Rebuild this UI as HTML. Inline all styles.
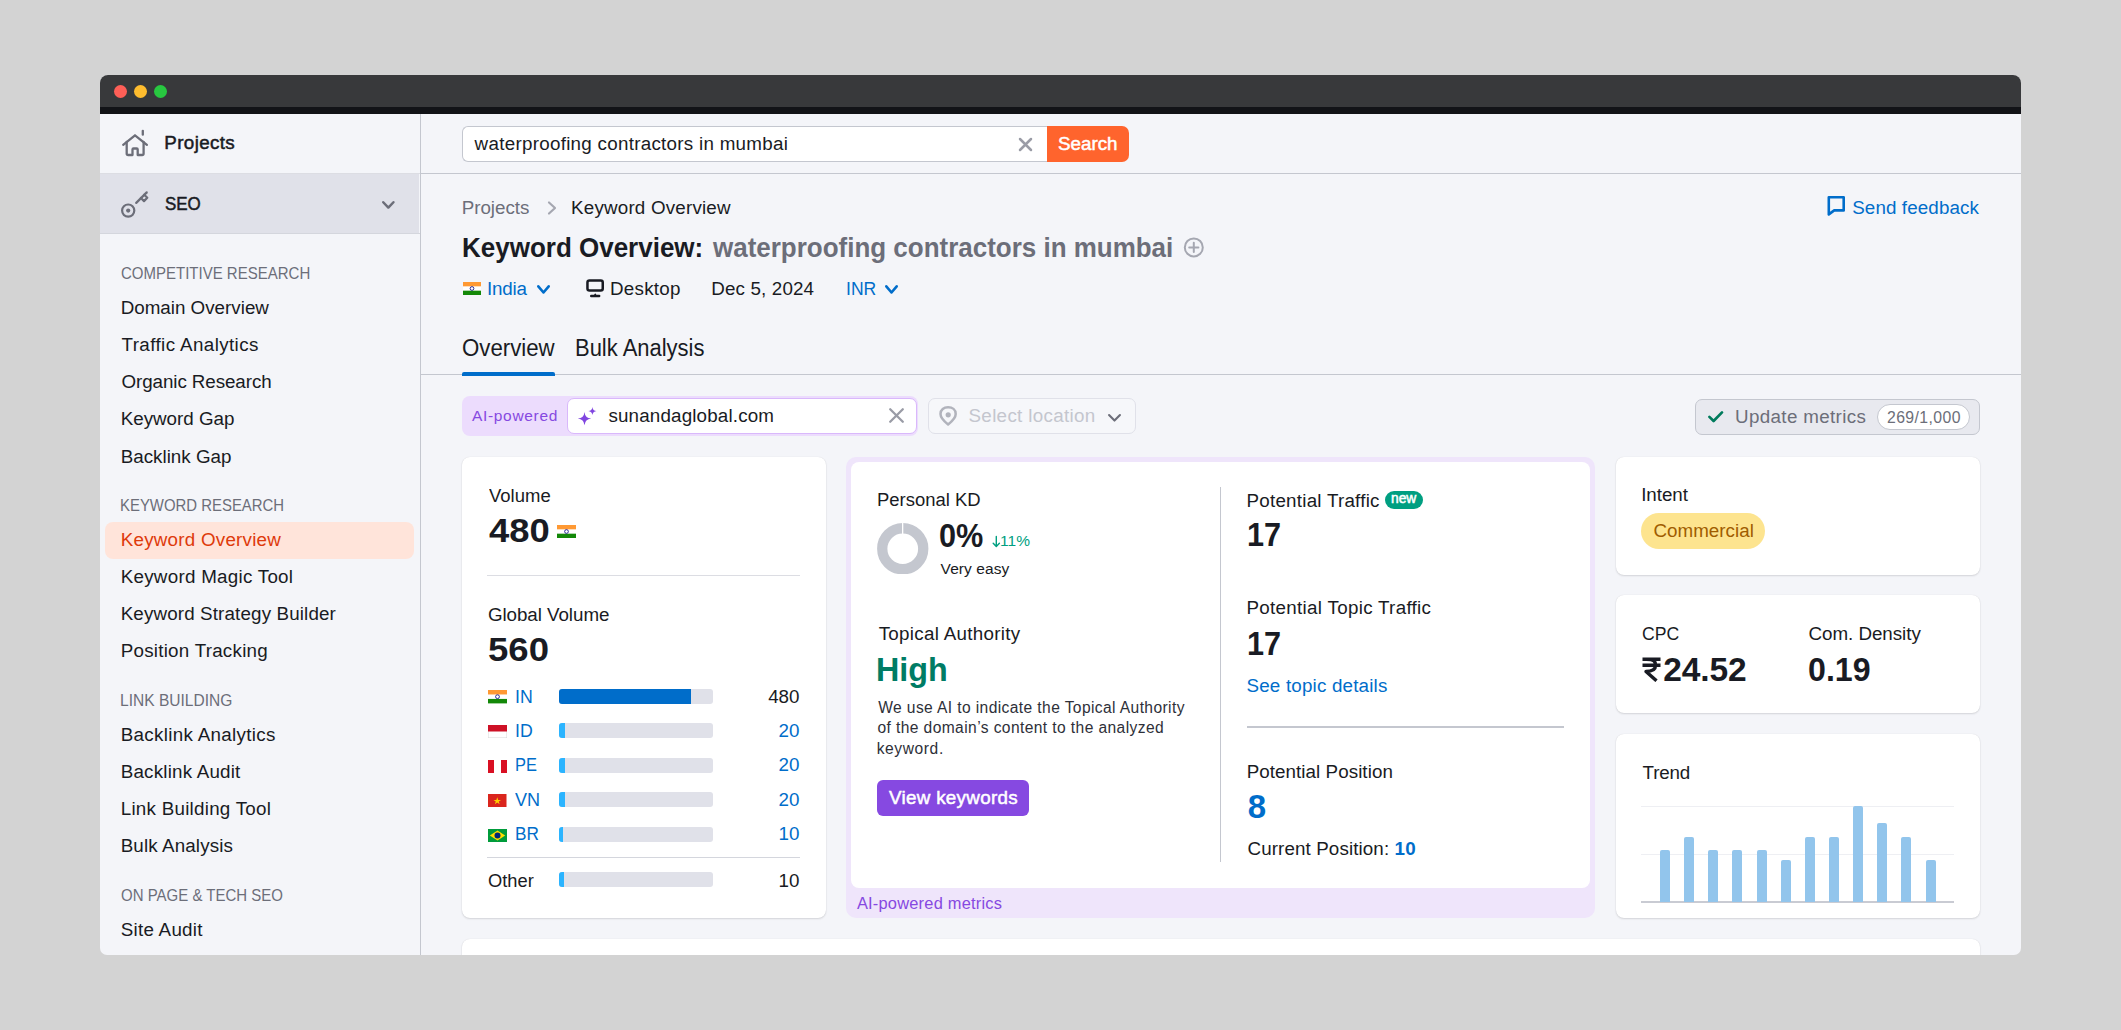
<!DOCTYPE html>
<html><head><meta charset="utf-8"><title>Keyword Overview</title>
<style>
html,body{margin:0;padding:0;}
body{width:2121px;height:1030px;background:#d3d3d3;position:relative;overflow:hidden;font-family:"Liberation Sans",sans-serif;}
.win{position:absolute;left:100px;top:75px;width:1921px;height:880px;background:#f4f5f9;border-radius:8px 8px 7px 7px;overflow:hidden;}
.b{position:absolute;display:block;}
.t{position:absolute;white-space:nowrap;line-height:1;}
</style></head><body><div class="win">
<div class="b" style="left:0px;top:0px;width:1921px;height:32px;background:#38393b;"></div>
<div class="b" style="left:0px;top:32px;width:1921px;height:7px;background:#121317;"></div>
<div class="b" style="left:14px;top:10.3px;width:13px;height:13px;background:#fe5f57;border-radius:50%;"></div>
<div class="b" style="left:34px;top:10.3px;width:13px;height:13px;background:#febc2e;border-radius:50%;"></div>
<div class="b" style="left:54px;top:10.3px;width:13px;height:13px;background:#28c840;border-radius:50%;"></div>
<div class="b" style="left:320px;top:39px;width:1px;height:841px;background:#c4c7cf;"></div>
<div class="b" style="left:0px;top:98px;width:320px;height:1px;background:#dcdde3;"></div>
<div class="b" style="left:0px;top:99px;width:319px;height:59px;background:#e0e1e9;"></div>
<div class="b" style="left:0px;top:158px;width:320px;height:1px;background:#d4d6dd;"></div>
<svg class="b" style="left:16px;top:49px" width="40" height="40" viewBox="0 0 40 40"><g fill="none" stroke="#6c6e79" stroke-width="2.3" stroke-linecap="round" stroke-linejoin="round"><path d="M7.2 20.8 L19 11.3 L30.9 20.8"/><path d="M10.7 18 V29.5 Q10.7 31 12.2 31 H16.5 V25.5 Q16.5 24.5 17.5 24.5 H20.7 Q21.7 24.5 21.7 25.5 V31 H26.1 Q27.6 31 27.6 29.5 V18"/><path d="M26.8 6.8 V10.7"/></g></svg>
<div class="t" id="sb_projects" style="left:64.32px;top:59.28px;font-size:18.8px;color:#191b23;-webkit-text-stroke:0.5px #191b23;letter-spacing:0.37px;">Projects</div>
<svg class="b" style="left:16px;top:110px" width="40" height="40" viewBox="0 0 40 40"><g fill="none" stroke="#6c6e79" stroke-width="2.2" stroke-linecap="round" stroke-linejoin="round"><circle cx="12.2" cy="25.6" r="6.1"/><path d="M20.2 17.9 L30.7 7.4"/><path d="M24.9 13 L28 16.1 L31.3 12.8 L28.2 9.7"/></g><circle cx="12.2" cy="25.6" r="2.1" fill="#6c6e79"/></svg>
<div class="t" id="sb_seo" style="left:65.12px;top:120.08px;font-size:18.8px;color:#191b23;-webkit-text-stroke:0.5px #191b23;transform:scaleX(0.9028);transform-origin:0 0;">SEO</div>
<svg class="b" style="left:280.2px;top:123.8px" width="16.7" height="11.8" viewBox="0 0 16.7 11.8"><path d="M3.25 3.25 L8.35 8.55 L13.45 3.25" fill="none" stroke="#6c6e79" stroke-width="2.5" stroke-linecap="round" stroke-linejoin="round"/></svg>
<div class="t" id="sb_h1" style="left:21px;top:190.12px;font-size:16.4px;color:#6c6e79;transform:scaleX(0.9153);transform-origin:0 0;">COMPETITIVE RESEARCH</div>
<div class="t" id="sb_a0" style="left:20.7px;top:224.08px;font-size:18.8px;color:#191b23;">Domain Overview</div>
<div class="t" id="sb_a1" style="left:21.5px;top:261.08px;font-size:18.8px;color:#191b23;letter-spacing:0.4px;">Traffic Analytics</div>
<div class="t" id="sb_a2" style="left:21.5px;top:298.48px;font-size:18.8px;color:#191b23;letter-spacing:-0.08px;">Organic Research</div>
<div class="t" id="sb_a3" style="left:20.7px;top:335.48px;font-size:18.8px;color:#191b23;">Keyword Gap</div>
<div class="t" id="sb_a4" style="left:20.7px;top:372.68px;font-size:18.8px;color:#191b23;letter-spacing:0.01px;">Backlink Gap</div>
<div class="t" id="sb_h2" style="left:20.2px;top:422.32px;font-size:16.4px;color:#6c6e79;transform:scaleX(0.9101);transform-origin:0 0;">KEYWORD RESEARCH</div>
<div class="b" style="left:5px;top:447.4px;width:309px;height:36.4px;background:#ffe4da;border-radius:8px;"></div>
<div class="t" id="sb_ko" style="left:20.7px;top:456.48px;font-size:18.8px;color:#de3a0b;letter-spacing:0.24px;">Keyword Overview</div>
<div class="t" id="sb_b0" style="left:20.7px;top:493.48px;font-size:18.8px;color:#191b23;letter-spacing:0.27px;">Keyword Magic Tool</div>
<div class="t" id="sb_b1" style="left:20.7px;top:530.08px;font-size:18.8px;color:#191b23;letter-spacing:0.14px;">Keyword Strategy Builder</div>
<div class="t" id="sb_b2" style="left:20.7px;top:567.08px;font-size:18.8px;color:#191b23;letter-spacing:0.25px;">Position Tracking</div>
<div class="t" id="sb_h3" style="left:20.2px;top:617.12px;font-size:16.4px;color:#6c6e79;transform:scaleX(0.9487);transform-origin:0 0;">LINK BUILDING</div>
<div class="t" id="sb_c0" style="left:20.7px;top:651.08px;font-size:18.8px;color:#191b23;letter-spacing:0.32px;">Backlink Analytics</div>
<div class="t" id="sb_c1" style="left:20.7px;top:688.48px;font-size:18.8px;color:#191b23;letter-spacing:0.21px;">Backlink Audit</div>
<div class="t" id="sb_c2" style="left:20.7px;top:725.08px;font-size:18.8px;color:#191b23;letter-spacing:0.26px;">Link Building Tool</div>
<div class="t" id="sb_c3" style="left:20.7px;top:762.28px;font-size:18.8px;color:#191b23;letter-spacing:0.13px;">Bulk Analysis</div>
<div class="t" id="sb_h4" style="left:21px;top:812.12px;font-size:16.4px;color:#6c6e79;transform:scaleX(0.9153);transform-origin:0 0;">ON PAGE &amp; TECH SEO</div>
<div class="t" id="sb_d0" style="left:20.7px;top:846.08px;font-size:18.8px;color:#191b23;letter-spacing:0.27px;">Site Audit</div>
<div class="b" style="left:321px;top:98px;width:1600px;height:1px;background:#c4c7cf;"></div>
<div class="b" style="left:362px;top:51px;width:590px;height:35.5px;background:#fff;border:1px solid #c4c7cf;border-right:none;border-radius:6px 0 0 6px;box-sizing:border-box;"></div>
<div class="t" id="q" style="left:374.62px;top:60.08px;font-size:18.8px;color:#191b23;letter-spacing:0.28px;">waterproofing contractors in mumbai</div>
<svg class="b" style="left:917px;top:61px" width="17" height="17" viewBox="0 0 17 17"><path d="M3 3 L14 14 M14 3 L3 14" stroke="#9a9ca6" stroke-width="2.5" stroke-linecap="round"/></svg>
<div class="b" style="left:947px;top:51px;width:82px;height:35.5px;background:#ff642d;border-radius:0 7px 7px 0;"></div>
<div class="t" id="btn_search" style="left:958px;top:60.08px;font-size:18.8px;color:#fff;-webkit-text-stroke:0.5px #fff;">Search</div>
<div class="t" id="bc1" style="left:361.64px;top:124.48px;font-size:18.8px;color:#6c6e79;">Projects</div>
<svg class="b" style="left:445px;top:124px" width="14" height="18" viewBox="0 0 14 18"><path d="M4 3.5 L10 9 L4 14.5" fill="none" stroke="#a5a7b1" stroke-width="2.2" stroke-linecap="round" stroke-linejoin="round"/></svg>
<div class="t" id="bc2" style="left:471.02px;top:124.48px;font-size:18.8px;color:#191b23;letter-spacing:0.2px;">Keyword Overview</div>
<div class="t" id="h1a" style="left:361.64px;top:158.63px;font-size:27.6px;color:#191b23;font-weight:700;transform:scaleX(0.9419);transform-origin:0 0;">Keyword Overview:</div>
<div class="t" id="h1b" style="left:613px;top:158.63px;font-size:27.6px;color:#6c6e79;font-weight:700;transform:scaleX(0.9411);transform-origin:0 0;">waterproofing contractors in mumbai</div>
<svg class="b" style="left:1082px;top:161px" width="24" height="23" viewBox="0 0 24 23"><circle cx="11.8" cy="11.4" r="9" fill="none" stroke="#a5a7b1" stroke-width="2"/><path d="M11.8 6.8 V16 M7.2 11.4 H16.4" stroke="#a5a7b1" stroke-width="2" stroke-linecap="round"/></svg>
<svg class="b" style="left:363px;top:207px" width="18" height="13" viewBox="0 0 18 13"><rect width="18" height="13" fill="#fff"/><rect width="18" height="4.33" fill="#ff9933"/><rect y="8.67" width="18" height="4.33" fill="#138808"/><circle cx="9" cy="6.5" r="1.86" fill="none" stroke="#000080" stroke-width="0.8"/></svg>
<div class="t" id="m_india" style="left:387.02px;top:204.68px;font-size:18.8px;color:#006dca;letter-spacing:-0.2px;">India</div>
<svg class="b" style="left:435px;top:208.2px" width="17" height="12.8" viewBox="0 0 17 12.8"><path d="M3.3 3.3 L8.5 9.5 L13.7 3.3" fill="none" stroke="#006dca" stroke-width="2.6" stroke-linecap="round" stroke-linejoin="round"/></svg>
<svg class="b" style="left:484px;top:202px" width="24" height="22" viewBox="0 0 24 22"><rect x="3.45" y="3.45" width="15.3" height="10" rx="2" fill="none" stroke="#191b23" stroke-width="2.5"/><path d="M7.2 19 H15.2" stroke="#191b23" stroke-width="2.4" stroke-linecap="round"/><path d="M9.6 18.5 L11.2 16.2 L12.8 18.5 Z" fill="#191b23"/></svg>
<div class="t" id="m_desk" style="left:510.08px;top:204.68px;font-size:18.8px;color:#191b23;letter-spacing:0.23px;">Desktop</div>
<div class="t" id="m_date" style="left:611.2px;top:204.68px;font-size:18.8px;color:#191b23;letter-spacing:0.16px;">Dec 5, 2024</div>
<div class="t" id="m_inr" style="left:745.7px;top:204.68px;font-size:18.8px;color:#006dca;transform:scaleX(0.9345);transform-origin:0 0;">INR</div>
<svg class="b" style="left:783.3px;top:208.2px" width="17" height="12.8" viewBox="0 0 17 12.8"><path d="M3.3 3.3 L8.5 9.5 L13.7 3.3" fill="none" stroke="#006dca" stroke-width="2.6" stroke-linecap="round" stroke-linejoin="round"/></svg>
<div class="t" id="fb" style="left:1752.2px;top:123.68px;font-size:18.8px;color:#006dca;letter-spacing:0.12px;">Send feedback</div>
<svg class="b" style="left:1724px;top:118px" width="24" height="25" viewBox="0 0 24 25"><path d="M4.8 4.3 H19.7 V17.4 H10.2 L4.8 21.4 Z" fill="none" stroke="#006dca" stroke-width="2.6" stroke-linejoin="round"/></svg>
<div class="t" id="tab1" style="left:361.64px;top:261.53px;font-size:23px;color:#191b23;transform:scaleX(0.9668);transform-origin:0 0;">Overview</div>
<div class="t" id="tab2" style="left:474.52px;top:261.53px;font-size:23px;color:#191b23;transform:scaleX(0.9553);transform-origin:0 0;">Bulk Analysis</div>
<div class="b" style="left:321px;top:299px;width:1600px;height:1px;background:#c4c7cf;"></div>
<div class="b" style="left:362px;top:297px;width:93px;height:3.5px;background:#006dca;border-radius:2px 2px 0 0;"></div>
<div class="b" style="left:362px;top:321.2px;width:456px;height:39.8px;background:#ecdcfd;border-radius:8px;"></div>
<div class="b" style="left:466.7px;top:322.8px;width:350.3px;height:36.7px;background:#fff;border:1.5px solid #d9b8fb;border-radius:7px;box-sizing:border-box;"></div>
<div class="t" id="ai_lbl" style="left:372px;top:333.28px;font-size:15.5px;color:#8649e1;letter-spacing:0.67px;">AI-powered</div>
<svg class="b" style="left:470px;top:325px" width="32" height="32" viewBox="0 0 32 32"><path d="M14.50 11.90 Q15.05 18.05 21.20 18.60 Q15.05 19.15 14.50 25.30 Q13.95 19.15 7.80 18.60 Q13.95 18.05 14.50 11.90 Z" fill="#8146e0"/><path d="M22.40 6.90 Q22.80 10.60 26.50 11.00 Q22.80 11.40 22.40 15.10 Q22.00 11.40 18.30 11.00 Q22.00 10.60 22.40 6.90 Z" fill="#8146e0"/></svg>
<div class="t" id="ai_dom" style="left:508.38px;top:332.08px;font-size:18.8px;color:#191b23;letter-spacing:0.17px;">sunandaglobal.com</div>
<svg class="b" style="left:788px;top:332px" width="17" height="17" viewBox="0 0 17 17"><path d="M2.2 2.2 L14.8 14.8 M14.8 2.2 L2.2 14.8" stroke="#9a9ca6" stroke-width="2.3" stroke-linecap="round"/></svg>
<div class="b" style="left:827.5px;top:323.3px;width:208.5px;height:35.7px;background:#f6f7fa;border:1px solid #e0e1e9;border-radius:7px;box-sizing:border-box;"></div>
<svg class="b" style="left:832px;top:325px" width="32" height="32" viewBox="0 0 32 32"><path d="M16.1 24.4 C11 20.5 8.5 17.2 8.5 14 C8.5 9.6 11.9 7.3 16.1 7.3 C20.3 7.3 23.7 9.6 23.7 14 C23.7 17.2 21.2 20.5 16.1 24.4 Z" fill="none" stroke="#b1b3bc" stroke-width="2.5" stroke-linejoin="round"/><circle cx="16.2" cy="14.8" r="2.6" fill="#b1b3bc"/></svg>
<div class="t" id="loc" style="left:868.52px;top:332.08px;font-size:18.8px;color:#c4c6ce;letter-spacing:0.32px;">Select location</div>
<svg class="b" style="left:1006px;top:336.6px" width="17" height="11.6" viewBox="0 0 17 11.6"><path d="M3.05 3.05 L8.5 8.55 L13.95 3.05" fill="none" stroke="#6c6e79" stroke-width="2.1" stroke-linecap="round" stroke-linejoin="round"/></svg>
<div class="b" style="left:1595px;top:324px;width:285px;height:35.5px;background:#e8e9ef;border:1px solid #c4c7cf;border-radius:7px;box-sizing:border-box;"></div>
<svg class="b" style="left:1606px;top:333px" width="20" height="17" viewBox="0 0 20 17"><path d="M3.4 8.9 L7.6 13 L16 4.4" fill="none" stroke="#007b5c" stroke-width="2.7" stroke-linecap="round" stroke-linejoin="round"/></svg>
<div class="t" id="upd" style="left:1635.02px;top:333.08px;font-size:18.8px;color:#6c6e79;letter-spacing:0.35px;">Update metrics</div>
<div class="b" style="left:1777.3px;top:329.2px;width:92.3px;height:25.6px;background:#fff;border:1px solid #c4c7cf;border-radius:13px;box-sizing:border-box;"></div>
<div class="t" id="upd_n" style="left:1787px;top:334.82px;font-size:15.8px;color:#6c6e79;letter-spacing:0.4px;">269/1,000</div>
<div class="b" style="left:362px;top:382px;width:364.3px;height:461px;background:#fff;border-radius:8px;box-shadow:0 1px 2px rgba(25,27,35,.14),0 0 1px rgba(25,27,35,.12);"></div>
<div class="t" id="v_lbl" style="left:388.68px;top:411.88px;font-size:18.8px;color:#191b23;transform:scaleX(0.9847);transform-origin:0 0;">Volume</div>
<div class="t" id="v_num" style="left:389px;top:439.04px;font-size:33.5px;color:#191b23;font-weight:700;transform:scaleX(1.0873);transform-origin:0 0;">480</div>
<svg class="b" style="left:457px;top:450px" width="19" height="13" viewBox="0 0 19 13"><rect width="19" height="13" fill="#fff"/><rect width="19" height="4.33" fill="#ff9933"/><rect y="8.67" width="19" height="4.33" fill="#138808"/><circle cx="9.5" cy="6.5" r="1.86" fill="none" stroke="#000080" stroke-width="0.8"/></svg>
<div class="b" style="left:387px;top:499.5px;width:313px;height:1.5px;background:#dcdde3;"></div>
<div class="t" id="gv_lbl" style="left:387.88px;top:531.08px;font-size:18.8px;color:#191b23;letter-spacing:-0.05px;">Global Volume</div>
<div class="t" id="gv_num" style="left:388.2px;top:557.42px;font-size:34px;color:#191b23;font-weight:700;transform:scaleX(1.0745);transform-origin:0 0;">560</div>
<svg class="b" style="left:388px;top:615.4px" width="19" height="13.4" viewBox="0 0 19 13.4"><rect width="19" height="13.4" fill="#fff"/><rect width="19" height="4.47" fill="#ff9933"/><rect y="8.93" width="19" height="4.47" fill="#138808"/><circle cx="9.5" cy="6.7" r="1.91" fill="none" stroke="#000080" stroke-width="0.8"/></svg>
<div class="t" id="cc0" style="left:414.5px;top:613.28px;font-size:18.8px;color:#006dca;transform:scaleX(0.9434);transform-origin:0 0;">IN</div>
<div class="b" style="left:459px;top:613.9px;width:153.6px;height:15px;background:#e0e1e9;border-radius:3px;overflow:hidden;"></div>
<div class="b" style="left:459px;top:613.9px;width:132.3px;height:15px;background:#006dca;border-radius:3px 0 0 3px;"></div>
<div class="t" id="cv0" style="left:-100px;top:613.28px;font-size:18.8px;color:#191b23;width:300px;left:399.5px;text-align:right;">480</div>
<svg class="b" style="left:388px;top:650.1px" width="19" height="13" viewBox="0 0 19 13"><rect width="19" height="13" fill="#fff" stroke="#d0d0d0" stroke-width="0.8"/><rect width="19" height="6.5" fill="#ce1126"/></svg>
<div class="t" id="cc1" style="left:414.5px;top:647.28px;font-size:18.8px;color:#006dca;transform:scaleX(0.9412);transform-origin:0 0;">ID</div>
<div class="b" style="left:459px;top:647.9px;width:153.6px;height:15px;background:#e0e1e9;border-radius:3px;overflow:hidden;"></div>
<div class="b" style="left:459px;top:647.9px;width:6.2px;height:15px;background:#2bb4ff;border-radius:3px 0 0 3px;"></div>
<div class="t" id="cv1" style="left:-100px;top:647.28px;font-size:18.8px;color:#006dca;width:300px;left:399.5px;text-align:right;">20</div>
<svg class="b" style="left:388px;top:684.7px" width="19" height="13.5" viewBox="0 0 19 13.5"><rect width="19" height="13.5" fill="#fff"/><rect width="6" height="13.5" fill="#d91023"/><rect x="13" width="6" height="13.5" fill="#d91023"/></svg>
<div class="t" id="cc2" style="left:414.5px;top:681.48px;font-size:18.8px;color:#006dca;transform:scaleX(0.8750);transform-origin:0 0;">PE</div>
<div class="b" style="left:459px;top:682.5px;width:153.6px;height:15px;background:#e0e1e9;border-radius:3px;overflow:hidden;"></div>
<div class="b" style="left:459px;top:682.5px;width:6.2px;height:15px;background:#2bb4ff;border-radius:3px 0 0 3px;"></div>
<div class="t" id="cv2" style="left:-100px;top:681.48px;font-size:18.8px;color:#006dca;width:300px;left:399.5px;text-align:right;">20</div>
<svg class="b" style="left:388px;top:719.2px" width="18.5" height="13" viewBox="0 0 18.5 13"><rect width="18.5" height="13" fill="#da251d"/><path d="M9.25 3.2 L10.2 5.9 L13 5.9 L10.75 7.6 L11.6 10.3 L9.25 8.6 L6.9 10.3 L7.75 7.6 L5.5 5.9 L8.3 5.9 Z" fill="#ffcd00"/></svg>
<div class="t" id="cc3" style="left:415.3px;top:716.48px;font-size:18.8px;color:#006dca;transform:scaleX(0.9607);transform-origin:0 0;">VN</div>
<div class="b" style="left:459px;top:717px;width:153.6px;height:15px;background:#e0e1e9;border-radius:3px;overflow:hidden;"></div>
<div class="b" style="left:459px;top:717px;width:6.2px;height:15px;background:#2bb4ff;border-radius:3px 0 0 3px;"></div>
<div class="t" id="cv3" style="left:-100px;top:716.48px;font-size:18.8px;color:#006dca;width:300px;left:399.5px;text-align:right;">20</div>
<svg class="b" style="left:388px;top:753.7px" width="19" height="13" viewBox="0 0 19 13"><rect width="19" height="13" fill="#009c3b"/><path d="M9.5 1.6 L17.2 6.5 L9.5 11.4 L1.8 6.5 Z" fill="#ffdf00"/><circle cx="9.5" cy="6.5" r="3" fill="#002776"/></svg>
<div class="t" id="cc4" style="left:414.5px;top:750.48px;font-size:18.8px;color:#006dca;transform:scaleX(0.9167);transform-origin:0 0;">BR</div>
<div class="b" style="left:459px;top:751.5px;width:153.6px;height:15px;background:#e0e1e9;border-radius:3px;overflow:hidden;"></div>
<div class="b" style="left:459px;top:751.5px;width:4.2px;height:15px;background:#2bb4ff;border-radius:3px 0 0 3px;"></div>
<div class="t" id="cv4" style="left:-100px;top:750.48px;font-size:18.8px;color:#006dca;width:300px;left:399.5px;text-align:right;">10</div>
<div class="b" style="left:387px;top:781.5px;width:313px;height:1px;background:#d4d6dd;"></div>
<div class="t" id="oth" style="left:388px;top:796.68px;font-size:18.8px;color:#191b23;transform:scaleX(0.9746);transform-origin:0 0;">Other</div>
<div class="b" style="left:459px;top:797px;width:153.6px;height:15.3px;background:#e0e1e9;border-radius:3px;"></div>
<div class="b" style="left:459px;top:797px;width:4.5px;height:15.3px;background:#2bb4ff;border-radius:3px 0 0 3px;"></div>
<div class="t" id="oth_v" style="left:-100px;top:796.68px;font-size:18.8px;color:#191b23;width:300px;left:399.5px;text-align:right;">10</div>
<div class="b" style="left:745.6px;top:382px;width:749.4px;height:460.5px;background:#efe5fb;border-radius:10px;"></div>
<div class="b" style="left:751.2px;top:386.6px;width:739px;height:426.4px;background:#fff;border-radius:8px;"></div>
<div class="t" id="ai_m" style="left:756.88px;top:820.12px;font-size:16.4px;color:#8649e1;letter-spacing:0.23px;">AI-powered metrics</div>
<div class="t" id="kd_lbl" style="left:776.52px;top:416.08px;font-size:18.8px;color:#191b23;transform:scaleX(0.9828);transform-origin:0 0;">Personal KD</div>
<svg class="b" style="left:777px;top:447.5px" width="51.5" height="51.5" viewBox="0 0 51.5 51.5"><circle cx="25.75" cy="25.75" r="20.5" fill="none" stroke="#c4c7cf" stroke-width="10.3"/><rect x="25" y="0" width="1.3" height="11" fill="#fff"/></svg>
<div class="t" id="kd_num" style="left:839.02px;top:444.24px;font-size:33.5px;color:#191b23;font-weight:700;transform:scaleX(0.9153);transform-origin:0 0;">0%</div>
<svg class="b" style="left:890px;top:459px" width="12" height="15" viewBox="0 0 12 15"><path d="M6.3 2.5 V12.3 M3.2 9.2 L6.3 12.4 L9.4 9.2" fill="none" stroke="#009f81" stroke-width="1.4" stroke-linecap="round" stroke-linejoin="round"/></svg>
<div class="t" id="kd_d" style="left:900px;top:458.48px;font-size:15.5px;color:#009f81;letter-spacing:0.1px;">11%</div>
<div class="t" id="kd_e" style="left:840.62px;top:485.88px;font-size:15.5px;color:#191b23;letter-spacing:0.08px;">Very easy</div>
<div class="t" id="ta_lbl" style="left:778.68px;top:550.08px;font-size:18.8px;color:#191b23;letter-spacing:0.3px;">Topical Authority</div>
<div class="t" id="ta_v" style="left:776.28px;top:577.84px;font-size:33.5px;color:#007c65;font-weight:700;transform:scaleX(0.9635);transform-origin:0 0;">High</div>
<div class="t" id="ta_d1" style="left:778.24px;top:625.39px;font-size:15.6px;color:#2e3039;letter-spacing:0.39px;">We use AI to indicate the Topical Authority</div>
<div class="t" id="ta_d2" style="left:777.44px;top:645.39px;font-size:15.6px;color:#2e3039;letter-spacing:0.4px;">of the domain’s content to the analyzed</div>
<div class="t" id="ta_d3" style="left:776.64px;top:665.99px;font-size:15.6px;color:#2e3039;letter-spacing:0.6px;">keyword.</div>
<div class="b" style="left:777.2px;top:705.1px;width:151.5px;height:35.7px;background:#8649e1;border-radius:6px;"></div>
<div class="t" id="vk" style="left:789px;top:714.48px;font-size:18.8px;color:#fff;-webkit-text-stroke:0.5px #fff;letter-spacing:0.31px;">View keywords</div>
<div class="b" style="left:1120px;top:412px;width:1.3px;height:374.6px;background:#c4c7cf;"></div>
<div class="t" id="pt_lbl" style="left:1146.52px;top:416.68px;font-size:18.8px;color:#191b23;letter-spacing:0.24px;">Potential Traffic</div>
<div class="b" style="left:1284.9px;top:415.8px;width:38px;height:17.9px;background:#009f81;border-radius:9px;"></div>
<div class="t" id="pt_new" style="left:1291px;top:417.22px;font-size:13.8px;color:#fff;-webkit-text-stroke:0.5px #fff;">new</div>
<div class="t" id="pt_v" style="left:1146.52px;top:443.44px;font-size:33.5px;color:#191b23;font-weight:700;transform:scaleX(0.9143);transform-origin:0 0;">17</div>
<div class="t" id="ptt_lbl" style="left:1146.52px;top:523.88px;font-size:18.8px;color:#191b23;letter-spacing:0.3px;">Potential Topic Traffic</div>
<div class="t" id="ptt_v" style="left:1146.52px;top:552.04px;font-size:33.5px;color:#191b23;font-weight:700;transform:scaleX(0.9143);transform-origin:0 0;">17</div>
<div class="t" id="std" style="left:1146.52px;top:602.28px;font-size:18.8px;color:#006dca;letter-spacing:0.19px;">See topic details</div>
<div class="b" style="left:1147px;top:650.5px;width:317px;height:2px;background:#c4c7cf;"></div>
<div class="t" id="pp_lbl" style="left:1146.7px;top:688.08px;font-size:18.8px;color:#191b23;letter-spacing:0.06px;">Potential Position</div>
<div class="t" id="pp_v" style="left:1147.66px;top:714.86px;font-size:33px;color:#006dca;font-weight:700;">8</div>
<div class="t" id="cp" style="left:1147.5px;top:764.88px;font-size:18.8px;color:#191b23;letter-spacing:0.11px;">Current Position: <b style="color:#006dca">10</b></div>
<div class="b" style="left:1516px;top:382px;width:364px;height:118px;background:#fff;border-radius:8px;box-shadow:0 1px 2px rgba(25,27,35,.14),0 0 1px rgba(25,27,35,.12);"></div>
<div class="t" id="in_lbl" style="left:1541.2px;top:411.28px;font-size:18.8px;color:#191b23;letter-spacing:-0.04px;">Intent</div>
<div class="b" style="left:1541px;top:437.9px;width:124px;height:35.9px;background:#fde48f;border-radius:18px;"></div>
<div class="t" id="in_v" style="left:1553.38px;top:446.68px;font-size:18.8px;color:#a05c00;letter-spacing:0.04px;">Commercial</div>
<div class="b" style="left:1516px;top:520px;width:364px;height:117.8px;background:#fff;border-radius:8px;box-shadow:0 1px 2px rgba(25,27,35,.14),0 0 1px rgba(25,27,35,.12);"></div>
<div class="t" id="cpc_lbl" style="left:1542px;top:550.08px;font-size:18.8px;color:#191b23;transform:scaleX(0.9389);transform-origin:0 0;">CPC</div>
<div class="t" id="cpc_v" style="left:1563.2px;top:577.84px;font-size:33.5px;color:#191b23;font-weight:700;letter-spacing:-0.1px;">24.52</div>
<svg class="b" style="left:1541px;top:582px" width="22" height="25" viewBox="0 0 22 25"><path d="M1.5 2.3 H19.5 M1.5 8.3 H19.5 M5.5 2.3 C13.5 2.3 14.5 4.5 14.5 8.5 C14.5 12.5 11 14.4 5 14.4 L15.5 23.8" fill="none" stroke="#191b23" stroke-width="3.4" stroke-linejoin="round"/></svg>
<div class="t" id="cd_lbl" style="left:1708.44px;top:550.08px;font-size:18.8px;color:#191b23;letter-spacing:-0.03px;">Com. Density</div>
<div class="t" id="cd_v" style="left:1707.64px;top:577.84px;font-size:33.5px;color:#191b23;font-weight:700;transform:scaleX(0.9597);transform-origin:0 0;">0.19</div>
<div class="b" style="left:1516px;top:659px;width:364px;height:184px;background:#fff;border-radius:8px;box-shadow:0 1px 2px rgba(25,27,35,.14),0 0 1px rgba(25,27,35,.12);"></div>
<div class="t" id="tr_lbl" style="left:1542.56px;top:688.88px;font-size:18.8px;color:#191b23;letter-spacing:-0.15px;">Trend</div>
<div class="b" style="left:1541.2px;top:731px;width:312.6px;height:1.2px;background:#eeeff3;"></div>
<div class="b" style="left:1541.2px;top:779px;width:312.6px;height:1.2px;background:#eeeff3;"></div>
<div class="b" style="left:1541.2px;top:826.4px;width:312.6px;height:1.4px;background:#c9cbd3;"></div>
<div class="b" style="left:1560px;top:775.2px;width:9.9px;height:51.4px;background:#92c5ec;border-radius:2px 2px 0 0;"></div>
<div class="b" style="left:1584.1px;top:762px;width:9.9px;height:64.6px;background:#92c5ec;border-radius:2px 2px 0 0;"></div>
<div class="b" style="left:1608.1px;top:775.2px;width:9.9px;height:51.4px;background:#92c5ec;border-radius:2px 2px 0 0;"></div>
<div class="b" style="left:1632.2px;top:775.2px;width:9.9px;height:51.4px;background:#92c5ec;border-radius:2px 2px 0 0;"></div>
<div class="b" style="left:1657.1px;top:775.2px;width:9.9px;height:51.4px;background:#92c5ec;border-radius:2px 2px 0 0;"></div>
<div class="b" style="left:1681px;top:785.1px;width:9.9px;height:41.5px;background:#92c5ec;border-radius:2px 2px 0 0;"></div>
<div class="b" style="left:1705.1px;top:762px;width:9.9px;height:64.6px;background:#92c5ec;border-radius:2px 2px 0 0;"></div>
<div class="b" style="left:1729px;top:762px;width:9.9px;height:64.6px;background:#92c5ec;border-radius:2px 2px 0 0;"></div>
<div class="b" style="left:1753.1px;top:731.1px;width:9.9px;height:95.5px;background:#92c5ec;border-radius:2px 2px 0 0;"></div>
<div class="b" style="left:1777.1px;top:748px;width:9.9px;height:78.6px;background:#92c5ec;border-radius:2px 2px 0 0;"></div>
<div class="b" style="left:1801.2px;top:762px;width:9.9px;height:64.6px;background:#92c5ec;border-radius:2px 2px 0 0;"></div>
<div class="b" style="left:1826.1px;top:785.1px;width:9.9px;height:41.5px;background:#92c5ec;border-radius:2px 2px 0 0;"></div>
<div class="b" style="left:362px;top:863.5px;width:1518px;height:61.5px;background:#fff;border-radius:8px;box-shadow:0 1px 2px rgba(25,27,35,.14),0 0 1px rgba(25,27,35,.12);"></div>
</div></body></html>
